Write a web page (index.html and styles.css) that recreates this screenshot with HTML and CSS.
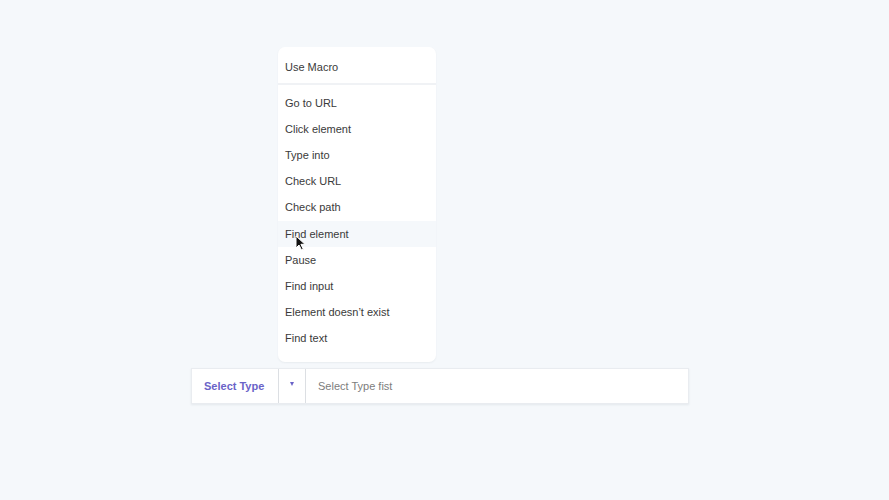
FILE: index.html
```html
<!DOCTYPE html>
<html lang="en">
<head>
  <meta charset="UTF-8" />
  <meta name="viewport" content="width=device-width, initial-scale=1.0" />
  <title>Select Type</title>
  <link rel="stylesheet" href="styles.css">
</head>
<body>
  <div class="picker">
    <ul class="type-menu">
      <li class="macro">Use Macro</li>
      <li class="sep"></li>
      <li>Go to URL</li>
      <li>Click element</li>
      <li>Type into</li>
      <li>Check URL</li>
      <li>Check path</li>
      <li class="hover">Find element
        <svg class="cursor" width="12" height="16" viewBox="0 0 12 16">
          <path d="M1 1 L1 13 L4 10 L6.5 15 L8.3 14.2 L5.9 9.3 L10 9.3 Z" fill="#111" stroke="#fff" stroke-width="1"/>
        </svg>
      </li>
      <li>Pause</li>
      <li>Find input</li>
      <li>Element doesn’t exist</li>
      <li>Find text</li>
    </ul>

    <div class="type-bar">
      <div class="type-label">Select Type</div>
      <div class="type-caret"><span></span></div>
      <input type="text" class="type-input" placeholder="Select Type fist" />
    </div>
  </div>
</body>
</html>
```

FILE: styles.css
```css
body {
  font-family: "Liberation Sans", Arial, sans-serif;
  background: #f5f8fb;
  margin: 0;
  height: 500px;
}
.picker {
  padding: 47px 0 0 191px;
  width: 498px;
}
.type-menu {
  list-style: none;
  margin: 0 0 6px 87px;
  padding: 6.5px 0 10.5px;
  width: 158px;
  background: #fff;
  border-radius: 7px;
  box-shadow: 0 1px 2px rgba(30, 45, 70, 0.06);
}
.type-menu li {
  position: relative;
  height: 26.2px;
  line-height: 26.2px;
  padding: 0 7px;
  font-size: 11px;
  color: #3a3a3a;
}
.type-menu li.sep {
  height: 2px;
  margin: 3px 0 5px;
  padding: 0;
  background: #f0f2f5;
}
.type-menu li.hover {
  background: #f5f8fb;
}
.cursor {
  position: absolute;
  left: 17px;
  top: 14px;
}
.type-bar {
  display: flex;
  height: 36px;
  background: #fff;
  border: 1px solid #e9ecf0;
  box-sizing: border-box;
  box-shadow: 0 1px 2px rgba(30, 45, 70, 0.08);
}
.type-label {
  width: 87px;
  display: flex;
  align-items: center;
  padding-left: 12px;
  box-sizing: border-box;
  font-size: 11px;
  font-weight: bold;
  color: #6a63c8;
  border-right: 1px solid #dcdfe3;
}
.type-caret {
  width: 27px;
  display: flex;
  justify-content: center;
  padding-top: 13px;
  box-sizing: border-box;
  border-right: 1px solid #dcdfe3;
}
.type-caret span {
  width: 0;
  height: 0;
  border-left: 2.5px solid transparent;
  border-right: 2.5px solid transparent;
  border-top: 4px solid #6a63c8;
}
.type-input {
  flex: 1;
  border: none;
  outline: none;
  padding: 0 12px;
  font-family: inherit;
  font-size: 11px;
  color: #333;
  background: transparent;
}
.type-input::placeholder {
  color: #7d7d7d;
}
```
